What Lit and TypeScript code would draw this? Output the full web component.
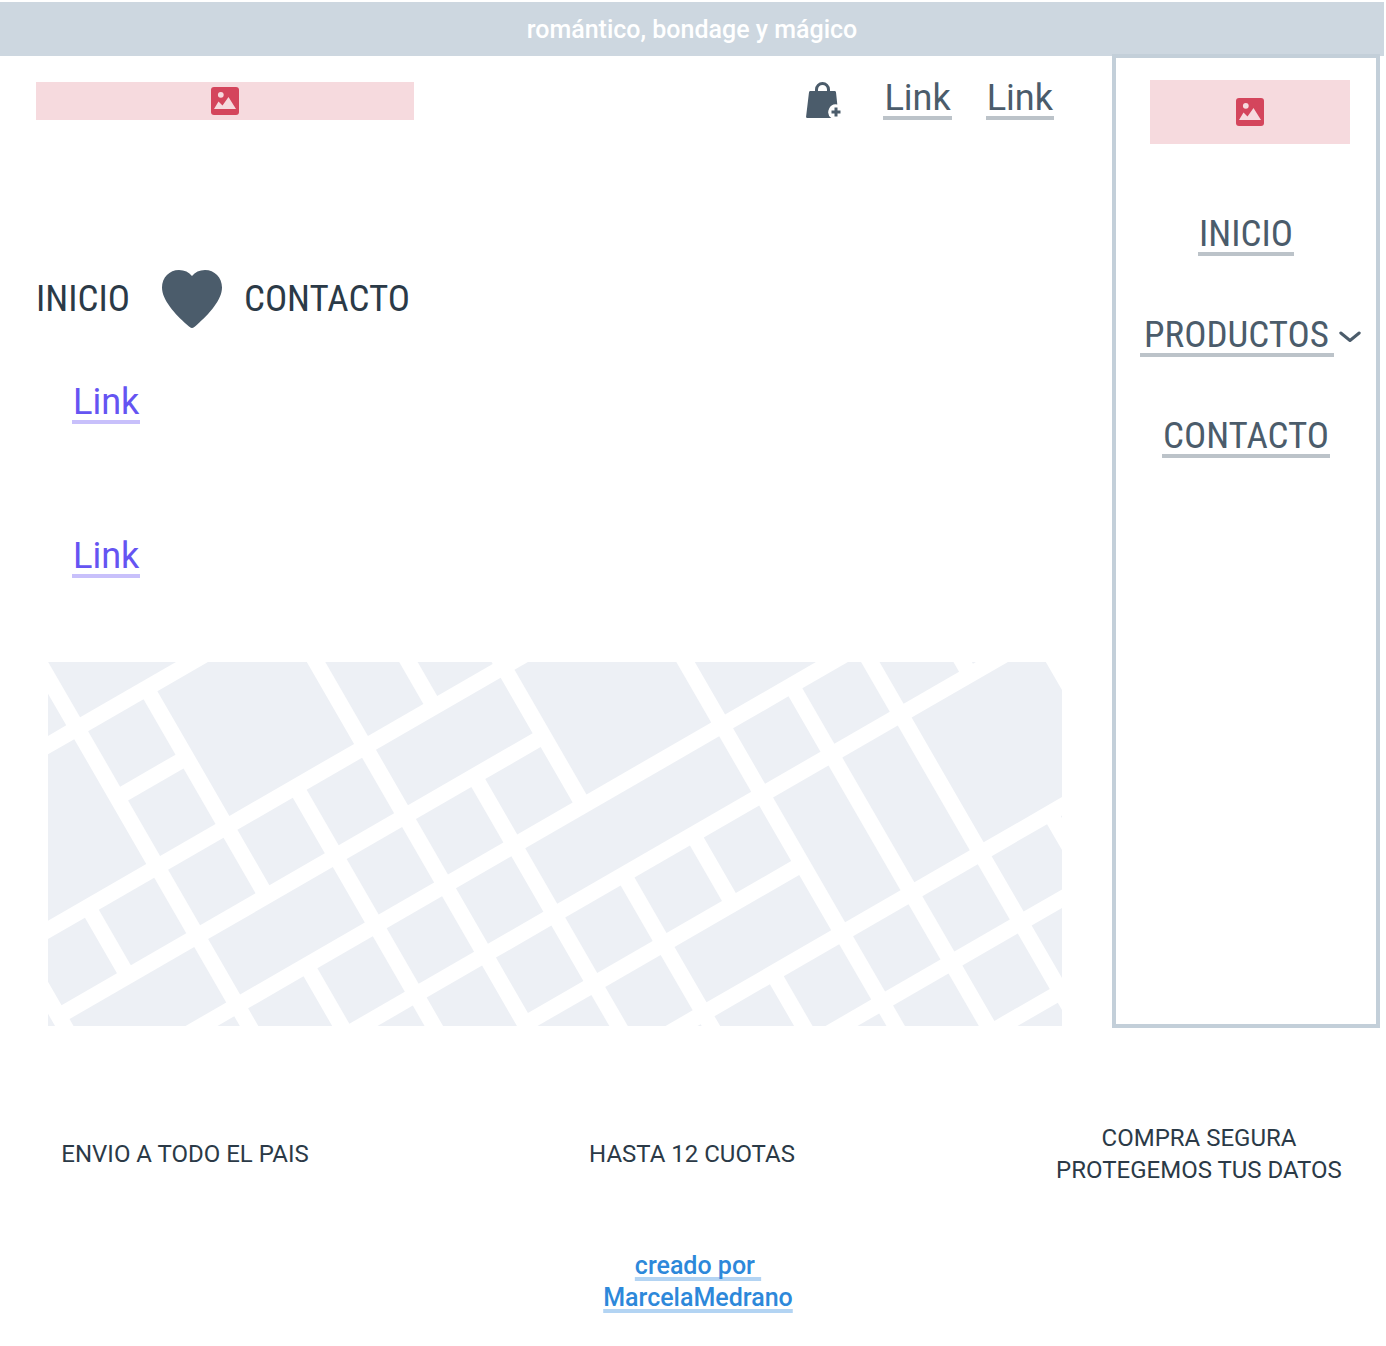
import { LitElement, html, svg, css } from "lit";
import { customElement, property } from "lit/decorators.js";

// City blocks on a rotated grid: column, row, columns spanned, rows spanned.
const BLOCKS: [number, number, number, number][] = [
  [0, 0, 1, 1], [0, 1, 1, 1], [0, 2, 1, 1], [0, -1, 2, 1], [-1, -1, 1, 1],
  [1, 0, 2, 2], [-2, 0, 2, 2], [-1, 2, 1, 1], [-2, 2, 1, 1], [0, 3, 2, 1],
  [-2, 3, 2, 1], [-3, 2, 1, 2], [1, 2, 1, 1], [2, 2, 1, 1], [3, 0, 1, 2],
  [4, 1, 1, 1], [3, 2, 2, 1], [2, 3, 1, 1], [3, 3, 1, 1], [4, 3, 1, 1],
  [5, 2, 2, 2], [2, 4, 1, 1], [1, 4, 1, 1], [0, 4, 1, 1], [-1, 4, 1, 1],
  [3, 4, 1, 1], [4, 4, 3, 1], [2, 5, 1, 2], [1, 5, 1, 1], [3, 5, 1, 1],
  [3, 6, 1, 1], [4, 5, 1, 1], [5, 5, 1, 1], [6, 5, 1, 1], [4, 6, 1, 1],
  [5, 6, 2, 1], [4, 7, 1, 1], [5, 7, 1, 1], [6, 7, 1, 1], [6, 8, 1, 1],
  [7, 3, 2, 1], [7, 4, 1, 1], [8, 4, 1, 1], [7, 5, 1, 2], [8, 5, 1, 2],
  [9, 4, 1, 1], [9, 5, 2, 2], [10, 4, 1, 1], [9, 7, 1, 1], [8, 7, 1, 1],
  [7, 7, 1, 1], [7, 8, 1, 1], [8, 8, 1, 1], [9, 8, 1, 1], [8, 9, 1, 1],
  [10, 7, 1, 1],
];
const PITCH = 80;
const STREET = 16;

@customElement("image-slot")
export class ImageSlot extends LitElement {
  static styles = css`
    :host { display: flex; align-items: center; justify-content: center; background: #f6dade; }
    .icon { display: block; width: 28px; height: 28px; }
  `;
  render() {
    return html`<svg class="icon" viewBox="0 0 28 28" role="img" aria-label="Imagen">
      <rect width="28" height="28" rx="3" fill="#d4455c" />
      <circle cx="9.8" cy="7.8" r="2.9" fill="#f6dade" />
      <path d="M3 22 L7.5 14.5 L11.5 18.5 L17.5 10 L25 22 Z" fill="#f6dade" />
    </svg>`;
  }
}

@customElement("street-map")
export class StreetMap extends LitElement {
  static styles = css`
    :host { display: block; }
    .map { display: block; width: 100%; }
  `;
  render() {
    return html`<svg class="map" viewBox="0 0 1014 364" role="img" aria-label="Mapa">
      <g transform="translate(40.1 69.2) rotate(-30)" fill="#edf0f5">
        ${BLOCKS.map(
          ([c, r, w, h]) => svg`<rect x=${c * PITCH} y=${r * PITCH}
            width=${w * PITCH - STREET} height=${h * PITCH - STREET} />`
        )}
      </g>
    </svg>`;
  }
}

@customElement("text-link")
export class TextLink extends LitElement {
  @property() label = "";
  @property({ reflect: true }) tone = "slate";
  static styles = css`
    :host { display: block; color: #4b5c6b; --rule: #bcc3c9; }
    :host([tone="violet"]) { color: #6554f2; --rule: #c8c0fb; }
    .link {
      display: block;
      padding: 0 1px;
      color: inherit;
      line-height: 36px;
      text-align: center;
      text-decoration: none;
      border-bottom: 4px solid var(--rule);
    }
  `;
  render() {
    return html`<a class="link" href="#">${this.label}</a>`;
  }
}

@customElement("app-root")
export class AppRoot extends LitElement {
  static styles = css`
    :host {
      display: block;
      padding-top: 2px;
      background: #fff;
      color: #2b3a47;
      font: 400 36px/40px Roboto, "Liberation Sans", sans-serif;
    }
    .caps { font-family: "Roboto Condensed", "Liberation Sans Narrow", Roboto, sans-serif; font-size: 37px; }
    .banner {
      padding: 12px 0 10px;
      margin-right: 2px;
      background: #cdd7e0;
      color: #fff;
      font-size: 25px;
      font-weight: 500;
      line-height: 32px;
      text-align: center;
    }
    .body { display: grid; grid-template-columns: 1fr 268px; padding-right: 6px; }
    .main { padding: 24px 50px 2px 36px; }
    .header { display: flex; align-items: flex-end; gap: 34px; padding-right: 8px; }
    .logo { width: 378px; height: 38px; }
    .bag { display: block; width: 36px; height: 38px; margin: 0 7px 0 auto; }
    .menu { display: flex; align-items: center; gap: 22px; margin-top: 150px; }
    .plain { color: inherit; text-decoration: none; }
    .heart { display: block; width: 60px; height: 58px; margin-left: 10px; }
    .links { display: grid; justify-items: start; gap: 114px; padding: 56px 36px 84px; }
    .map { margin-left: 12px; }
    .side {
      display: flex;
      flex-direction: column;
      align-items: center;
      margin-top: -2px;
      padding-top: 22px;
      border: 4px solid #c3cfd9;
    }
    .shifted { margin-left: 8px; }
    .side-logo { width: 200px; height: 64px; }
    .side-nav { display: grid; justify-items: center; gap: 61px; padding-top: 72px; }
    .products { display: flex; align-items: center; gap: 5px; }
    .wide { min-width: 194px; }
    .chevron { display: block; width: 22px; height: 12px; }
    .footer { padding: 94px 42px 32px 40px; font-size: 25px; line-height: 32px; text-align: center; }
    .perks { display: grid; grid-template-columns: 290px 1fr 290px; align-items: center; font-size: 24px; }
    .perk { margin: 0; white-space: nowrap; }
    .credit { margin: 64px 0 0 12px; font-weight: 500; }
    .author {
      color: #2d88da;
      text-decoration: underline 4px #b3d4f3;
      text-decoration-skip-ink: none;
      text-underline-offset: 3px;
    }
  `;

  render() {
    return html`
      <div class="banner">romántico, bondage y mágico</div>
      <div class="body">
        <main class="main">
          <header class="header">
            <image-slot class="logo"></image-slot>
            <svg class="bag" viewBox="0 0 36 38" role="img" aria-label="Agregar a la bolsa">
              <path d="M10.5 10 V7.5 a6 6 0 0 1 12 0 V10" fill="none" stroke="#4b5c6b" stroke-width="3" />
              <path d="M4.5 9 H28.5 a1.5 1.5 0 0 1 1.5 1.3 L31.3 22.5 a7.6 7.6 0 0 0 -6 13.5 H1.3 a1.2 1.2 0 0 1 -1.2 -1.4 L3 10.3 a1.5 1.5 0 0 1 1.5 -1.3 Z" fill="#4b5c6b" />
              <path d="M30 25.5 V34.5 M25.5 30 H34.5" stroke="#4b5c6b" stroke-width="3" fill="none" />
            </svg>
            <text-link label="Link"></text-link>
            <text-link label="Link"></text-link>
          </header>
          <nav class="menu caps">
            <a class="plain" href="#">INICIO</a>
            <svg class="heart" viewBox="0 0 60 58" aria-hidden="true">
              <path d="M30 58 C28.5 58 27 56.5 25 54.8 C13 44 0 30 0 17.5 C0 7.5 7.5 0 17 0 C22.5 0 27 2 30 6 C33 2 37.5 0 43 0 C52.5 0 60 7.5 60 17.5 C60 30 47 44 35 54.8 C33 56.5 31.5 58 30 58 Z" fill="#4b5c6b" />
            </svg>
            <a class="plain" href="#">CONTACTO</a>
          </nav>
          <div class="links">
            <text-link label="Link" tone="violet"></text-link>
            <text-link label="Link" tone="violet"></text-link>
          </div>
          <street-map class="map"></street-map>
        </main>
        <aside class="side">
          <image-slot class="side-logo shifted"></image-slot>
          <nav class="side-nav caps">
            <text-link label="INICIO"></text-link>
            <div class="products shifted">
              <text-link class="wide" label="PRODUCTOS"></text-link>
              <svg class="chevron" viewBox="0 0 22 12" aria-hidden="true">
                <path d="M1.8 2 L11 9.5 L20.2 2" fill="none" stroke="#4b5c6b" stroke-width="3" stroke-linecap="round" stroke-linejoin="round" />
              </svg>
            </div>
            <text-link label="CONTACTO"></text-link>
          </nav>
        </aside>
      </div>
      <footer class="footer">
        <div class="perks">
          <p class="perk">ENVIO A TODO EL PAIS</p>
          <p class="perk">HASTA 12 CUOTAS</p>
          <p class="perk">COMPRA SEGURA<br />PROTEGEMOS TUS DATOS</p>
        </div>
        <p class="credit"><a class="author" href="#">creado por&nbsp;<br />MarcelaMedrano</a></p>
      </footer>
    `;
  }
}
